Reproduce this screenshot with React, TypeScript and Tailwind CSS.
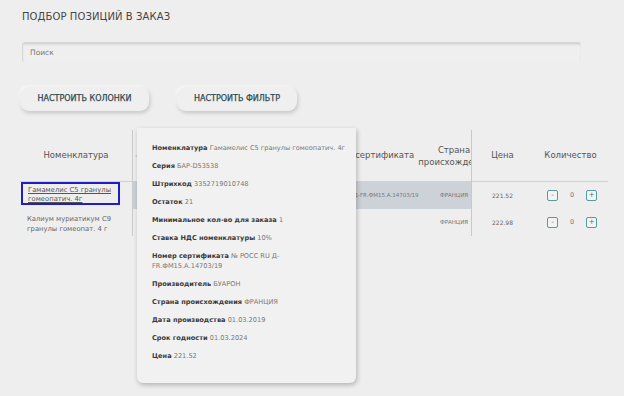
import React from "react";

const font = { fontFamily: '"DejaVu Sans", "Noto Sans", sans-serif' };

function QtyBtn({ sign }: { sign: string }) {
  return (
    <div className="w-[11px] h-[11px] border border-[#5a9a9c] rounded-[2px] flex items-center justify-center text-[7px] leading-none text-[#4f6f73] bg-[#f3f3f3]">
      {sign}
    </div>
  );
}

function Qty() {
  return (
    <div className="flex items-center justify-center gap-[12px] pl-[3px]">
      <QtyBtn sign="-" />
      <span className="text-[6.5px] text-[#777]">0</span>
      <QtyBtn sign="+" />
    </div>
  );
}

const info: { k: string; v: React.ReactNode }[] = [
  { k: "Номенклатура", v: "Гамамелис С5 гранулы гомеопатич. 4г" },
  { k: "Серия", v: "БАР-D53538" },
  { k: "Штрихкод", v: "3352719010748" },
  { k: "Остаток", v: "21" },
  { k: "Минимальное кол-во для заказа", v: "1" },
  { k: "Ставка НДС номенклатуры", v: "10%" },
  {
    k: "Номер сертификата",
    v: (
      <>
        № РОСС RU Д-
        <br />
        FR.ФМ15.А.14703/19
      </>
    ),
  },
  { k: "Производитель", v: "БУАРОН" },
  { k: "Страна происхождения", v: "ФРАНЦИЯ" },
  { k: "Дата производства", v: "01.03.2019" },
  { k: "Срок годности", v: "01.03.2024" },
  { k: "Цена", v: "221.52" },
];

export default function App() {
  return (
    <div
      className="relative w-[624px] h-[396px] overflow-hidden bg-[#eeeeee]"
      style={font}
    >
      <div className="pt-[11px] pl-[22px] text-[10px] leading-[12px] text-[#454545] tracking-[0.1px]">
        ПОДБОР ПОЗИЦИЙ В ЗАКАЗ
      </div>

      <div className="mt-[19px] ml-[22px] w-[559px] h-[20px] rounded-[3px] bg-[#efefef] border-t-2 border-l border-[#d6d6d6] shadow-[inset_0_1px_2px_rgba(0,0,0,0.08)] flex items-center pl-[7px]">
        <span className="text-[7.5px] text-[#777]">Поиск</span>
      </div>

      <div className="mt-[25px] flex">
        <div className="ml-[20px] w-[129px] h-[24px] rounded-[9px] bg-[#efefef] shadow-[1px_2px_4px_rgba(0,0,0,0.18),-1px_-1px_3px_rgba(255,255,255,0.9)] flex items-center justify-center text-[8px] text-[#2f4a52] [-webkit-text-stroke:0.25px_#2f4a52]">
          НАСТРОИТЬ КОЛОНКИ
        </div>
        <div className="ml-[28px] w-[120px] h-[24px] rounded-[9px] bg-[#efefef] shadow-[1px_2px_4px_rgba(0,0,0,0.18),-1px_-1px_3px_rgba(255,255,255,0.9)] flex items-center justify-center text-[8px] text-[#2f4a52] [-webkit-text-stroke:0.25px_#2f4a52]">
          НАСТРОИТЬ ФИЛЬТР
        </div>
      </div>

      {/* table */}
      <div className="mt-[19px] ml-[20px] w-[588px] flex">
        {/* left fixed column */}
        <div className="w-[113px] border-r border-[#c9c9c9]">
          <div className="h-[52px] border-b border-[#d2d2d2] flex items-center justify-center text-[8.5px] text-[#555]">
            Номенклатура
          </div>
          <div className="h-[27px] pl-[1px]">
            <div className="w-[99px] h-[23px] border-2 border-[#1f1fc4] pl-[5px] pt-[2px] text-[6.8px] leading-[9px] text-[#555] underline">
              Гамамелис С5 гранулы
              <br />
              гомеопатич. 4г
            </div>
          </div>
          <div className="h-[27px] pl-[7px] pt-[6px] text-[6.8px] leading-[9.5px] text-[#666]">
            Калиум муриатикум С9
            <br />
            гранулы гомеопат. 4 г
          </div>
        </div>

        {/* middle scrolled columns */}
        <div className="w-[339px] overflow-hidden border-r border-[#c9c9c9]">
          <div className="w-[400px]">
            <div className="flex h-[52px] border-b border-[#d2d2d2] text-[8.5px] text-[#555]">
              <div className="w-[186px] flex items-center pl-[2px] text-[6px] text-[#999]">
                ‹
              </div>
              <div className="w-[100px] flex items-center justify-center whitespace-nowrap">
                Номер сертификата
              </div>
              <div className="w-[70px] flex items-center justify-center text-center leading-[12px]">
                Страна
                <br />
                происхождения
              </div>
            </div>
            <div className="flex h-[27px] bg-[#cdd2d8] text-[5.5px] text-[#777] items-center">
              <div className="w-[186px]" />
              <div className="w-[100px] text-center whitespace-nowrap">
                № РОСС RU Д-FR.ФМ15.А.14703/19
              </div>
              <div className="w-[70px] text-center">ФРАНЦИЯ</div>
            </div>
            <div className="flex h-[27px] text-[5.5px] text-[#777] items-center">
              <div className="w-[186px]" />
              <div className="w-[100px]" />
              <div className="w-[70px] text-center">ФРАНЦИЯ</div>
            </div>
          </div>
        </div>

        {/* right columns */}
        <div className="flex-1">
          <div className="flex h-[52px] border-b border-[#d2d2d2] text-[8.5px] text-[#555]">
            <div className="w-[61px] flex items-center justify-center">Цена</div>
            <div className="flex-1 flex items-center justify-center">Количество</div>
          </div>
          <div className="flex h-[27px] items-center text-[6px] text-[#666]">
            <div className="w-[61px] text-center">221.52</div>
            <div className="flex-1">
              <Qty />
            </div>
          </div>
          <div className="flex h-[27px] items-center text-[6px] text-[#666]">
            <div className="w-[61px] text-center">222.98</div>
            <div className="flex-1">
              <Qty />
            </div>
          </div>
        </div>
      </div>

      {/* tooltip popup */}
      <div className="absolute left-[137px] top-[128px] w-[219px] h-[255px] bg-[#f1f1f1] rounded-b-[6px] shadow-[1px_2px_5px_rgba(0,0,0,0.25)] pl-[15px] pt-[15px] flex flex-col gap-[8px]">
        {info.map((it) => (
          <div key={it.k} className="text-[6.6px] leading-[10px] whitespace-nowrap">
            <span className="font-bold text-[#3a3a3a]">{it.k}</span>{" "}
            <span className="text-[#777]">{it.v}</span>
          </div>
        ))}
      </div>
    </div>
  );
}
